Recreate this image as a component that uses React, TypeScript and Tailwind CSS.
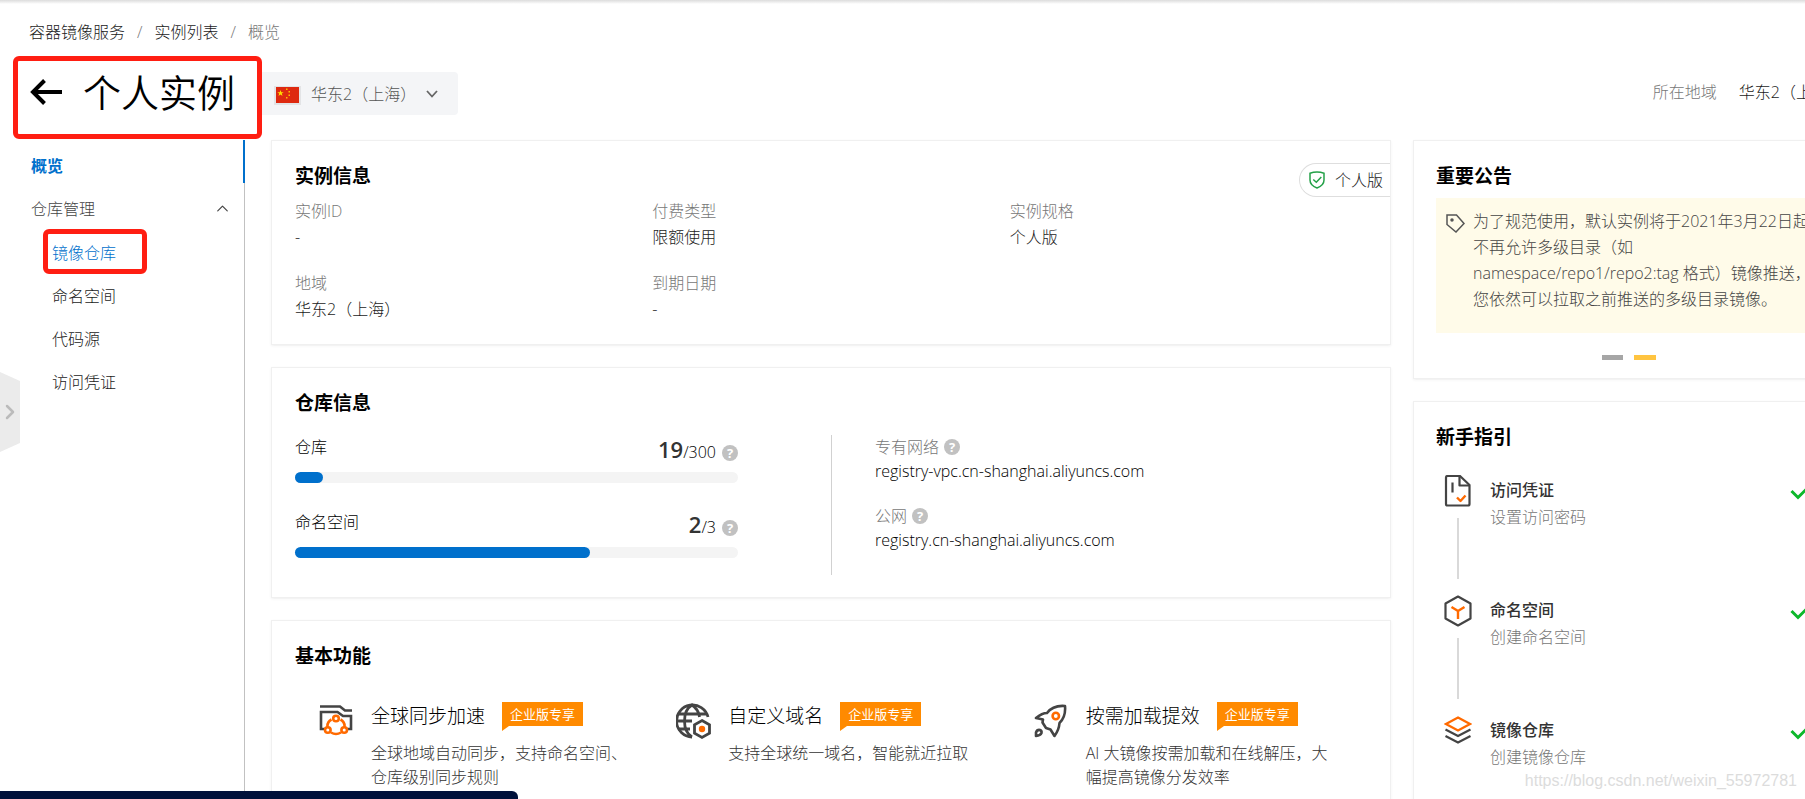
import React from 'react';
import { ChevronRight, ChevronUp } from 'lucide-react';

const instanceFields = [
    { label: '实例ID', value: '-' },
    { label: '付费类型', value: '限额使用' },
    { label: '实例规格', value: '个人版' },
    { label: '地域', value: '华东2（上海）' },
    { label: '到期日期', value: '-' },
];

const quotas = [
    { label: '仓库', used: 19, total: 300 },
    { label: '命名空间', used: 2, total: 3 },
];

const endpoints = [
    { label: '专有网络', host: 'registry-vpc.cn-shanghai.aliyuncs.com' },
    { label: '公网', host: 'registry.cn-shanghai.aliyuncs.com' },
];

const features = [
    { title: '全球同步加速', desc: '全球地域自动同步，支持命名空间、仓库级别同步规则', icon: <SyncIcon /> },
    { title: '自定义域名', desc: '支持全球统一域名，智能就近拉取', icon: <DomainIcon /> },
    { title: '按需加载提效', desc: 'AI 大镜像按需加载和在线解压，大幅提高镜像分发效率', icon: <RocketIcon /> },
];

const steps = [
    { title: '访问凭证', desc: '设置访问密码', icon: <CredentialIcon /> },
    { title: '命名空间', desc: '创建命名空间', icon: <NamespaceIcon /> },
    { title: '镜像仓库', desc: '创建镜像仓库', icon: <LayersIcon /> },
];

function SyncIcon() {
    return (
        <svg width="34" height="32" viewBox="0 0 34 32" fill="none" strokeWidth="2.6">
            <path d="M1 1.5H21L26 5.5H33" stroke="#444" />
            <path d="M7 24H2V7H18.5L24 11H32V24H27" stroke="#444" />
            <path d="M12.500 14.500Q8 17 8.500 22M21.500 14.500Q26 17 25.500 22M12 27.500Q17 30.500 22 27.500" stroke="#ff6a00" />
            <circle cx="17" cy="13.500" r="2.800" stroke="#ff6a00" />
            <circle cx="8.800" cy="25" r="2.800" stroke="#ff6a00" />
            <circle cx="25.200" cy="25" r="2.800" stroke="#ff6a00" />
        </svg>
    );
}

function DomainIcon() {
    return (
        <svg width="38" height="38" viewBox="2 -1 38 38" fill="none" stroke="#444" strokeWidth="2.800">
            <path d="M34 14A16 16 0 1 0 18 34" />
            <path d="M18 34C8 28 8 8 18 2C22.500 5 25 9 25.500 14M4 11H32M2 18H18M4 26H16" />
            <path d="M28 17.500L35.500 21.700V30.300L28 34.500L20.500 30.300V21.700Z" />
            <circle cx="28" cy="26" r="3.200" fill="#ff6a00" stroke="none" />
        </svg>
    );
}

function RocketIcon() {
    return (
        <svg width="34" height="34" viewBox="0 0 34 34" fill="none" stroke="#444" strokeWidth="2.600" strokeLinejoin="round">
            <path d="M2 14Q8 9 13 9Q19 1 31 2Q32 13 25.500 19Q25 26 20.500 32L16.500 25.500L12 24L8.500 18.500L9 15.500Z" />
            <path d="M2 32V28.500Q3 25.500 6 26Q8 27 7.500 29Q6.500 31.500 2 32Z" />
            <circle cx="21.800" cy="12" r="3.200" stroke="#ff6a00" />
        </svg>
    );
}

function CredentialIcon() {
    return (
        <svg width="28" height="32" viewBox="0 0 28 32" fill="none" stroke="#444" strokeWidth="2.200" strokeLinejoin="round">
            <path d="M3.500 1H16L25.500 10V29Q25.500 30.500 24 30.500H3.500Q2 30.500 2 29V2.500Q2 1 3.500 1Z" />
            <path d="M15.500 1V10.500H25M8.500 7.500V17.500" />
            <path d="M13 22.500L16.500 26L21.500 20.500" stroke="#ff6a00" strokeWidth="2.400" />
        </svg>
    );
}

function NamespaceIcon() {
    return (
        <svg width="28" height="32" viewBox="0 0 28 32" fill="none" stroke="#444" strokeWidth="2.200" strokeLinejoin="round">
            <path d="M14 1.500L26.500 8.500V23.500L14 30.500L1.500 23.500V8.500Z" />
            <path d="M7.500 12L14 16L20.500 12M14 16V24" stroke="#ff6a00" strokeWidth="2.400" />
        </svg>
    );
}

function LayersIcon() {
    return (
        <svg width="28" height="32" viewBox="0 0 28 32" fill="none" stroke="#444" strokeWidth="2.200">
            <path d="M14 2.500L26 9L14 15.500L2 9Z" stroke="#ff6a00" />
            <path d="M1.500 14.500L14 21L26.500 14.500M1.500 21L14 27.500L26.500 21" />
        </svg>
    );
}

function ChinaFlag() {
    return (
        <svg width="27" height="19" viewBox="0 0 27 19" className="mt-1 shrink-0">
            <rect width="27" height="19" fill="#e3e4e6" />
            <rect x="2" y="1" width="23" height="16" fill="#de2910" />
            <path d="M6.500 4L7.300 6.200H9.700L7.800 7.600L8.500 10L6.500 8.500L4.500 10L5.200 7.600L3.300 6.200H5.700Z" fill="#ffde00" />
            <path d="M12 2.500h1.500v1.500H12zM14.500 5h1.500v1.500h-1.500zM14.500 8.500h1.500v1.500h-1.500zM12 11h1.500v1.500H12z" fill="#ffb800" />
        </svg>
    );
}

function Help() {
    return (
        <button type="button" aria-label="帮助" className="flex size-4 shrink-0 items-center justify-center rounded-full bg-[#c1c1c1] text-[13px] leading-4 font-bold text-white">
            ?
        </button>
    );
}

function Card({ title, className = '', children }: { title: string; className?: string; children: React.ReactNode }) {
    return (
        <section className={`border border-[#f0f0f0] bg-white pt-[21px] shadow-sm shadow-black/5 ${className}`}>
            <h2 className="text-[19px] leading-7 font-bold text-black">{title}</h2>
            {children}
        </section>
    );
}

function Sidebar() {
    return (
        <nav className="w-[245px] shrink-0 border-r border-[#c1c1c1]">
            <a href="#overview" className="-mr-px flex h-[43px] items-center border-r-2 border-[#0070cc] pt-2 pl-[31px] font-bold text-[#0070cc]">
                概览
            </a>
            <button type="button" className="mt-[3px] flex h-[43px] w-full items-center justify-between pt-[2px] pr-3 pl-[31px] text-[#444]">
                仓库管理
                <ChevronUp size={19} strokeWidth={1.5} />
            </button>
            <div className="relative">
                <a href="#repos" className="flex h-[43px] items-center pt-1 pl-[52px] text-[#0070cc]">镜像仓库</a>
                <span className="pointer-events-none absolute top-0 left-[43px] h-[45px] w-[104px] rounded-md border-5 border-[#ff1e12]" />
            </div>
            <a href="#namespaces" className="flex h-[43px] items-center pt-1 pl-[52px]">命名空间</a>
            <a href="#sources" className="flex h-[43px] items-center pt-1 pl-[52px]">代码源</a>
            <a href="#credentials" className="flex h-[43px] items-center pt-1 pl-[52px]">访问凭证</a>
        </nav>
    );
}

export default function App() {
    return (
        <div className="relative h-screen overflow-hidden bg-white font-['Open_Sans','Noto_Sans_CJK_SC',sans-serif] text-base font-light text-[#1a1a1a]">
            <div className="h-1 bg-linear-to-b from-[#dcdcdc] to-white" />

            {/* the console is wider than the window, its right edge is clipped */}
            <div className="-mr-10 flex h-full flex-col">
                <nav className="flex h-[52px] items-center gap-3 pt-1 pl-[29px]">
                    <a href="#acr">容器镜像服务</a>
                    <span className="text-[#777]">/</span>
                    <a href="#instances">实例列表</a>
                    <span className="text-[#777]">/</span>
                    <span className="text-[#777]">概览</span>
                </nav>

                <header className="flex h-[84px] items-start">
                    <div className="ml-[13px] flex h-[83px] w-[249px] shrink-0 items-start rounded-md border-5 border-[#ff1e12] pt-[3px] pl-3">
                        <button type="button" aria-label="返回" className="mt-[15px] mr-[21px]">
                            <svg width="32" height="26" viewBox="0 0 32 26" fill="none" stroke="#000" strokeWidth="4">
                                <path d="M14.500 1.500L3 13L14.500 24.500M2 13H32" />
                            </svg>
                        </button>
                        <h1 className="text-[38px] leading-[56px] font-[350] text-black">个人实例</h1>
                    </div>
                    <label className="mt-4 flex h-[43px] w-[196px] items-center rounded-r-sm bg-[#f4f5f7] pl-3 text-[#555]">
                        <ChinaFlag />
                        <select aria-label="地域" className="mt-px ml-[10px] w-[115px] appearance-none bg-transparent">
                            <option>华东2（上海）</option>
                        </select>
                        <svg width="12" height="8" viewBox="0 0 12 8" fill="none" stroke="#666" strokeWidth="1.800">
                            <path d="M1 1L6 6.500L11 1" />
                        </svg>
                    </label>
                    <div className="mt-6 mr-px ml-auto flex gap-[22px]">
                        <span className="text-[#777]">所在地域</span>
                        <span>华东2（上海）</span>
                    </div>
                </header>

                <div className="flex min-h-0 flex-1">
                    <Sidebar />

                    <main className="ml-[26px] flex min-w-0 flex-1 flex-col gap-[22px]">
                        <Card title="实例信息" className="relative px-[23px] pb-[22px]">
                            <dl className="mt-1 grid grid-cols-3 gap-y-4">
                                {instanceFields.map((f) => (
                                    <div key={f.label} className="leading-[26px]">
                                        <dt className="pt-1 text-[#777]">{f.label}</dt>
                                        <dd>{f.value}</dd>
                                    </div>
                                ))}
                            </dl>
                            <div className="absolute top-[22px] right-0 flex h-[34px] items-center gap-[10px] rounded-l-full border border-r-0 border-[#dedede] pr-[7px] pl-[9px]">
                                <svg width="16" height="18" viewBox="0 0 16 18" fill="none" stroke="#24a148" strokeWidth="1.500">
                                    <path d="M8 1C5.500 1 3 1.500 1 2.200V9C1 13 4 15.500 8 17C12 15.500 15 13 15 9V2.200C13 1.500 10.500 1 8 1Z" />
                                    <path d="M4.300 8.500L7.300 11.300L12.300 6" />
                                </svg>
                                个人版
                            </div>
                        </Card>

                        <Card title="仓库信息" className="px-[23px] pb-3">
                            <div className="mt-[18px] flex">
                                <div className="w-[443px]">
                                    {quotas.map((q) => (
                                        <div key={q.label} className="h-[75px]">
                                            <div className="flex h-[37px] items-start justify-between text-black">
                                                <span>{q.label}</span>
                                                <span className="flex items-baseline">
                                                    <b className="text-[22px] leading-7 font-semibold text-[#333]">{q.used}</b>
                                                    <span className="mr-[6px]">/{q.total}</span>
                                                    <Help />
                                                </span>
                                            </div>
                                            <div className="h-[11px] rounded-full bg-[#f4f4f4]">
                                                <div className="h-full rounded-full bg-[#0070cc]" style={{ width: `${(q.used / q.total) * 100}%` }} />
                                            </div>
                                        </div>
                                    ))}
                                </div>
                                <dl className="ml-[93px] h-[140px] border-l border-[#d1d1d1] pl-[43px] leading-6">
                                    {endpoints.map((e) => (
                                        <div key={e.label} className="h-[69px]">
                                            <dt className="flex items-center gap-[5px] text-[#777]">
                                                {e.label}
                                                <Help />
                                            </dt>
                                            <dd className="text-black">{e.host}</dd>
                                        </div>
                                    ))}
                                </dl>
                            </div>
                        </Card>

                        <Card title="基本功能" className="flex-1 px-[23px]">
                            <div className="mt-[26px] grid grid-cols-3">
                                {features.map((f) => (
                                    <div key={f.title} className="flex pl-6">
                                        <div className="mt-[5px] flex h-10 w-[52px] shrink-0 items-center">{f.icon}</div>
                                        <div className="w-[256px]">
                                            <div className="flex items-center">
                                                <h3 className="text-[19px] leading-10 text-black">{f.title}</h3>
                                                <span className="relative mb-1 ml-[17px] bg-[#ff8a00] px-2 text-[13px] leading-6 font-normal text-white">
                                                    企业版专享
                                                    <svg className="absolute top-full left-0" width="7" height="5" viewBox="0 0 7 5">
                                                        <path d="M0 0H7L0 5Z" fill="#ff8a00" />
                                                    </svg>
                                                </span>
                                            </div>
                                            <p className="mt-[5px] leading-6 text-[#333]">{f.desc}</p>
                                        </div>
                                    </div>
                                ))}
                            </div>
                        </Card>
                    </main>

                    <aside className="ml-[22px] flex w-[432px] shrink-0 flex-col gap-[22px]">
                        <Card title="重要公告" className="px-[22px] pb-[18px]">
                            <div className="mt-2 flex h-[135px] bg-[#fffbe9] pt-[10px] pr-1 pl-[10px] text-[#444]">
                                <svg className="mt-[6px] mr-2 shrink-0" width="19" height="19" viewBox="0 0 19 19" fill="none" stroke="#555" strokeWidth="1.500">
                                    <path d="M1 1H10.500L18 9.500L10 18L1 10.500Z" />
                                    <circle cx="6" cy="6" r="1" fill="#555" />
                                </svg>
                                <p className="leading-[26px]">
                                    为了规范使用，默认实例将于2021年3月22日起
                                    <br />
                                    不再允许多级目录（如
                                    <br />
                                    namespace/repo1/repo2:tag 格式）镜像推送，
                                    <br />
                                    您依然可以拉取之前推送的多级目录镜像。
                                </p>
                            </div>
                            <div className="mt-[22px] flex justify-center gap-[11px]">
                                <button type="button" aria-label="公告 1" className="h-[5px] w-[21px] bg-[#a6a6a6]" />
                                <button type="button" aria-label="公告 2" className="h-[5px] w-[22px] bg-[#ffc440]" />
                            </div>
                        </Card>

                        <Card title="新手指引" className="flex-1 px-[22px]">
                            <ol className="mt-6">
                                {steps.map((s, i) => (
                                    <li key={s.title} className="flex h-[120px] pl-2">
                                        <div className="flex w-7 flex-col items-center">
                                            {s.icon}
                                            {i < steps.length - 1 && <div className="mt-[11px] h-[61px] w-[2px] bg-[#d9d9d9]" />}
                                        </div>
                                        <div className="ml-[18px] flex-1">
                                            <h3 className="leading-[30px] font-medium text-[#333]">{s.title}</h3>
                                            <p className="leading-6 text-[#777]">{s.desc}</p>
                                        </div>
                                        <svg className="mt-3 mr-3" width="20" height="14" viewBox="0 0 20 14" fill="none" stroke="#0db82b" strokeWidth="3">
                                            <path d="M1.500 4L8 10.500L17.500 1" />
                                        </svg>
                                    </li>
                                ))}
                            </ol>
                        </Card>
                    </aside>
                </div>
            </div>

            {/* drawer handle */}
            <button type="button" aria-label="展开菜单" className="absolute top-[372px] left-0 flex h-20 w-5 items-center bg-[#ebebeb] text-[#bbb] [clip-path:polygon(0_0,100%_9px,100%_71px,0_100%)]">
                <ChevronRight size={24} strokeWidth={2.5} className="-ml-0.5 shrink-0" />
            </button>

            <div className="absolute bottom-0 left-0 h-2 w-[518px] rounded-tr-md bg-[#00113a]" />
            <span className="absolute right-2 bottom-2 font-['Liberation_Sans',sans-serif] text-[16px] leading-5 font-normal text-[#dcdcdc]">
                https://blog.csdn.net/weixin_55972781
            </span>
        </div>
    );
}
